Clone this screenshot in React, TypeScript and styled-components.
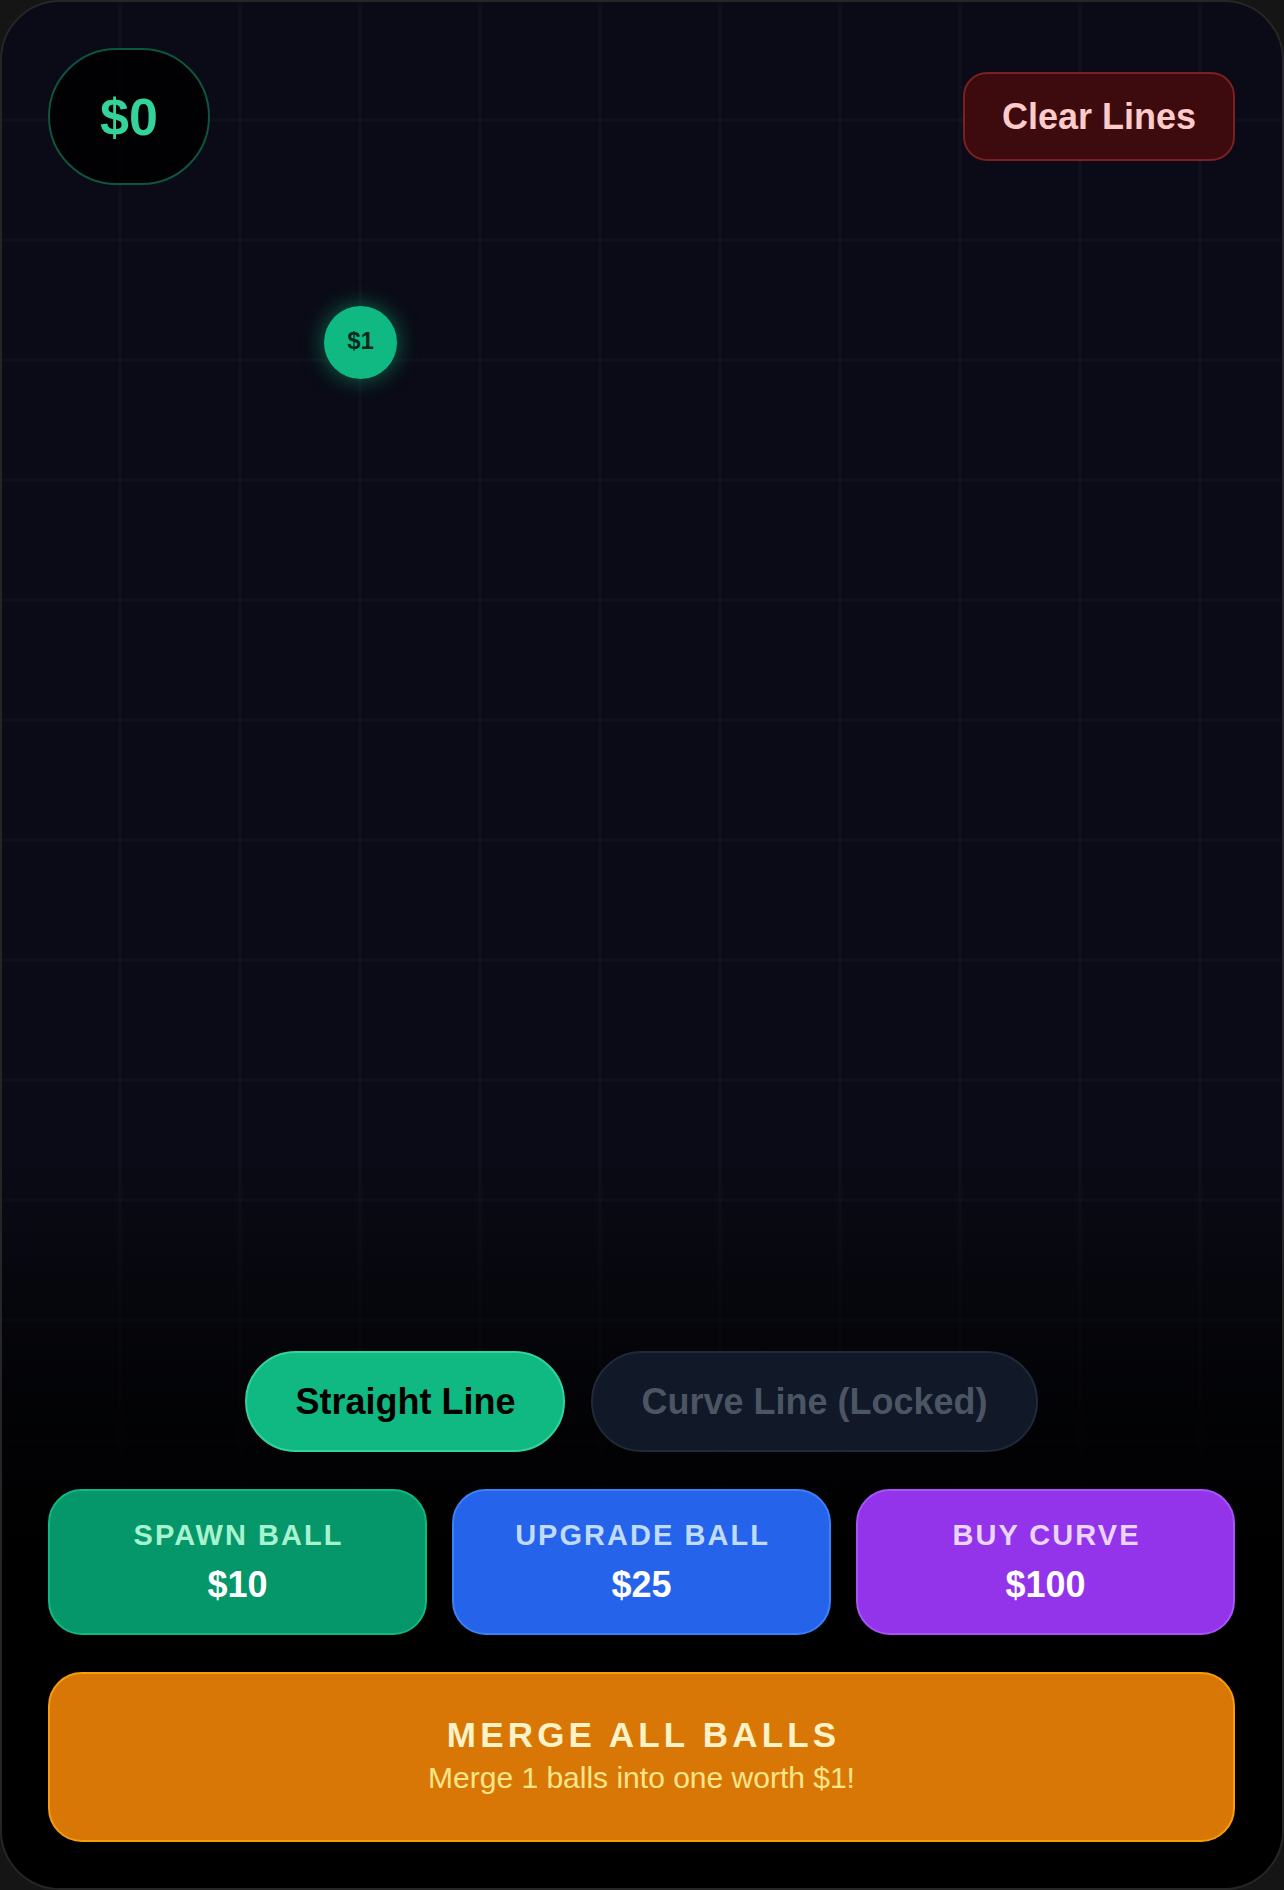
import React from "react";
import styled, { createGlobalStyle } from "styled-components";

const GlobalStyle = createGlobalStyle`
  html, body {
    margin: 0;
    padding: 0;
    background: #151515;
  }
  body {
    font-family: "Liberation Sans", Arial, sans-serif;
  }
  * { box-sizing: border-box; }
`;

const Frame = styled.div`
  position: relative;
  width: 1284px;
  height: 1890px;
  border: 2px solid #262626;
  border-radius: 60px;
  overflow: hidden;
  display: flex;
  flex-direction: column;
  background-color: #0a0b16;
  background-image:
    linear-gradient(to right, rgba(255, 255, 255, 0.012) 0px, rgba(255, 255, 255, 0.022) 2px, rgba(255, 255, 255, 0.012) 4px, transparent 4px),
    linear-gradient(to bottom, rgba(255, 255, 255, 0.012) 0px, rgba(255, 255, 255, 0.022) 2px, rgba(255, 255, 255, 0.012) 4px, transparent 4px);
  background-size: 120px 120px;
  background-position: -4px -4px;
`;

const TopBar = styled.div`
  display: flex;
  align-items: center;
  justify-content: space-between;
  padding: 46px 47px 0 46px;
`;

const MoneyPill = styled.div`
  height: 137px;
  padding: 0 50px;
  display: flex;
  align-items: center;
  justify-content: center;
  border-radius: 9999px;
  border: 2px solid #0e553f;
  background: rgba(0, 0, 0, 0.85);
  color: #34d399;
  font-weight: 700;
  font-size: 52px;
  line-height: 1;
`;

const ClearButton = styled.button`
  height: 89px;
  padding: 0 37px;
  border-radius: 24px;
  border: 2px solid #7a1f22;
  background: #3d0b0e;
  color: #fecaca;
  font-family: inherit;
  font-weight: 700;
  font-size: 36px;
  cursor: pointer;
`;

const Ball = styled.div<{ $x: number; $y: number; $size: number }>`
  position: absolute;
  left: ${(p) => p.$x}px;
  top: ${(p) => p.$y}px;
  width: ${(p) => p.$size}px;
  height: ${(p) => p.$size}px;
  border-radius: 50%;
  background: #10b981;
  box-shadow: 0 0 22px rgba(16, 185, 129, 0.55);
  display: flex;
  align-items: center;
  justify-content: center;
  padding-bottom: 4px;
  color: rgba(0, 0, 0, 0.8);
  font-weight: 700;
  font-size: 24px;
`;

const Panel = styled.div`
  margin-top: auto;
  padding: 200px 47px 46px 46px;
  display: flex;
  flex-direction: column;
  gap: 37px;
  background: linear-gradient(
    to bottom,
    rgba(0, 0, 0, 0) 0%,
    rgba(0, 0, 0, 0.75) 35%,
    rgba(0, 0, 0, 1) 55%
  );
`;

const ToolRow = styled.div`
  display: flex;
  justify-content: center;
  gap: 26px;
`;

const ToolButton = styled.button<{ $active?: boolean }>`
  height: 101px;
  padding: 0 48px;
  border-radius: 9999px;
  border: 2px solid ${(p) => (p.$active ? "#34d399" : "#1f2937")};
  background: ${(p) => (p.$active ? "#10b981" : "#111827")};
  color: ${(p) => (p.$active ? "#000000" : "#4b5563")};
  font-family: inherit;
  font-weight: 700;
  font-size: 36px;
  cursor: pointer;
`;

const CardGrid = styled.div`
  display: grid;
  grid-template-columns: repeat(3, 1fr);
  gap: 25px;
`;

const ShopCard = styled.button<{ $bg: string; $border: string }>`
  height: 146px;
  display: flex;
  flex-direction: column;
  align-items: center;
  justify-content: center;
  gap: 6px;
  border-radius: 34px;
  border: 2px solid ${(p) => p.$border};
  background: ${(p) => p.$bg};
  font-family: inherit;
  cursor: pointer;
  padding: 0;
`;

const CardLabel = styled.span<{ $color: string }>`
  font-size: 29px;
  line-height: 40px;
  font-weight: 700;
  letter-spacing: 0.07em;
  color: ${(p) => p.$color};
  margin-right: -0.07em;
`;

const CardPrice = styled.span`
  font-size: 36px;
  line-height: 48px;
  font-weight: 700;
  color: #ffffff;
`;

const MergeButton = styled.button`
  height: 170px;
  display: flex;
  flex-direction: column;
  align-items: center;
  justify-content: center;
  gap: 1px;
  padding: 0 0 4px;
  border-radius: 34px;
  border: 2px solid #f59e0b;
  background: #d97706;
  font-family: inherit;
  cursor: pointer;
`;

const MergeTitle = styled.span`
  font-size: 35px;
  line-height: 44px;
  font-weight: 700;
  letter-spacing: 0.12em;
  margin-right: -0.12em;
  color: #fef3c7;
`;

const MergeSub = styled.span`
  font-size: 30px;
  line-height: 40px;
  color: #fde68a;
`;

const cards = [
  { label: "SPAWN BALL", price: "$10", bg: "#059669", border: "#10b981", color: "#a7f3d0" },
  { label: "UPGRADE BALL", price: "$25", bg: "#2563eb", border: "#3b82f6", color: "#bfdbfe" },
  { label: "BUY CURVE", price: "$100", bg: "#9333ea", border: "#a855f7", color: "#e9d5ff" },
];

export default function App() {
  return (
    <>
      <GlobalStyle />
      <Frame>
        <TopBar>
          <MoneyPill>$0</MoneyPill>
          <ClearButton>Clear Lines</ClearButton>
        </TopBar>
        <Ball $x={322} $y={304} $size={73}>$1</Ball>
        <Panel>
          <ToolRow>
            <ToolButton $active>Straight Line</ToolButton>
            <ToolButton>Curve Line (Locked)</ToolButton>
          </ToolRow>
          <CardGrid>
            {cards.map((c) => (
              <ShopCard key={c.label} $bg={c.bg} $border={c.border}>
                <CardLabel $color={c.color}>{c.label}</CardLabel>
                <CardPrice>{c.price}</CardPrice>
              </ShopCard>
            ))}
          </CardGrid>
          <MergeButton>
            <MergeTitle>MERGE ALL BALLS</MergeTitle>
            <MergeSub>Merge 1 balls into one worth $1!</MergeSub>
          </MergeButton>
        </Panel>
      </Frame>
    </>
  );
}
